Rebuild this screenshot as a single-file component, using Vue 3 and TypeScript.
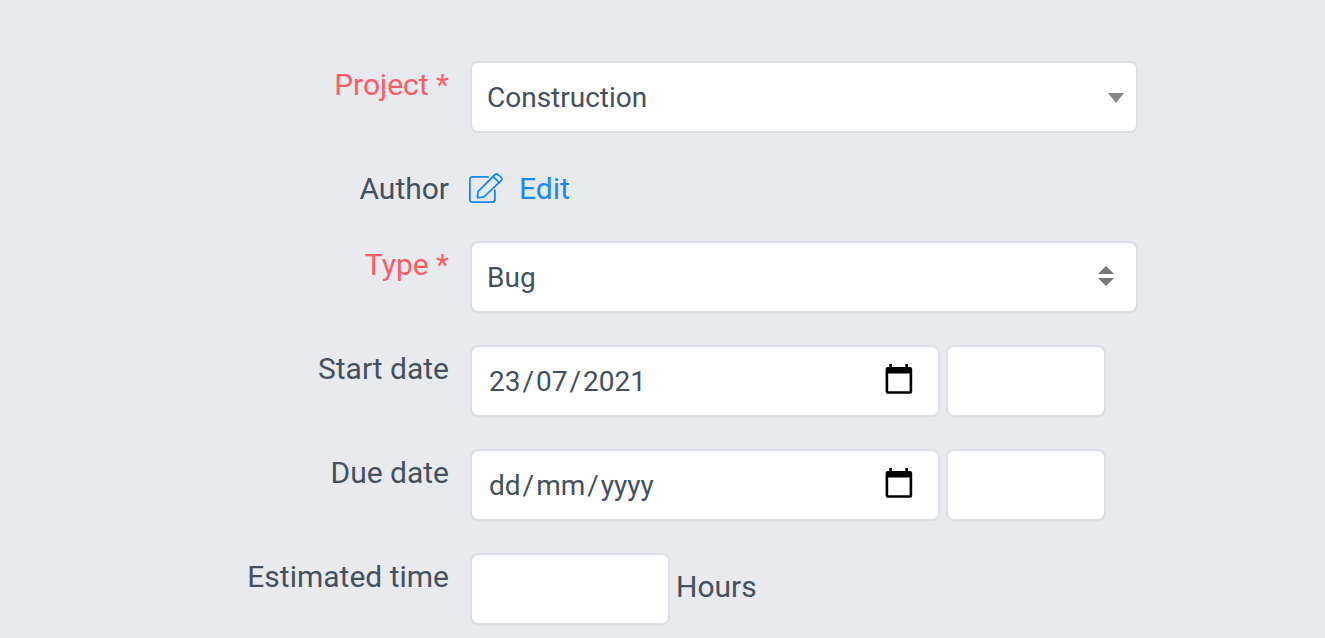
<script setup lang="ts">
import { ref } from 'vue'

interface DateRow {
  id: string
  label: string
  day: string
  month: string
  year: string
}

const project = ref('Construction')
const issueType = ref('Bug')
const estimated = ref('')
const times = ref<Record<string, string>>({ start: '', due: '' })
const dates = ref<DateRow[]>([
  { id: 'start', label: 'Start date', day: '23', month: '07', year: '2021' },
  { id: 'due', label: 'Due date', day: '', month: '', year: '' },
])
</script>

<template>
  <form class="form" @submit.prevent>
    <div class="row">
      <label class="label required" for="project">Project *</label>
      <div class="control select-wrap">
        <select id="project" v-model="project" class="box select">
          <option>Construction</option>
        </select>
        <svg class="arrow arrow-single" width="16" height="10" viewBox="0 0 16 10" aria-hidden="true">
          <path d="M0 0H16L8 10Z" fill="#888" />
        </svg>
      </div>
    </div>

    <div class="row">
      <span class="label">Author</span>
      <div class="control">
        <a class="edit" href="#">
          <svg width="34" height="32" viewBox="0 0 34 32" fill="none" stroke="currentColor" stroke-width="1.8" stroke-linejoin="round" stroke-linecap="round" aria-hidden="true">
            <path d="M19 3.9H3.4Q.9 3.9 .9 6.4V26.6Q.9 29.1 3.4 29.1H23.4Q25.9 29.1 25.9 26.6V17.5" />
            <path d="M8.4 24.6L9 18.6L25.6 2Q27.4 .2 29.3 1.8L31.9 4.2Q33.8 6 32 7.9L15.6 23.2Q14.4 24.2 12.6 24.3Z" />
            <path d="M24.1 3.6L30.2 9.6" />
          </svg>
          <span>Edit</span>
        </a>
      </div>
    </div>

    <div class="row">
      <label class="label required" for="type">Type *</label>
      <div class="control select-wrap">
        <select id="type" v-model="issueType" class="box select">
          <option>Bug</option>
        </select>
        <svg class="arrow arrow-double" width="16" height="20" viewBox="0 0 16 20" aria-hidden="true">
          <path d="M0 8L8 0L16 8ZM0 12H16L8 20Z" fill="#777" />
        </svg>
      </div>
    </div>

    <div v-for="d in dates" :key="d.id" class="row">
      <label class="label" :for="d.id + '-day'">{{ d.label }}</label>
      <div class="control">
        <div class="box date" role="group" :aria-label="d.label">
          <input :id="d.id + '-day'" v-model="d.day" class="part" type="text" placeholder="dd" maxlength="2" />
          <span class="slash">/</span>
          <input v-model="d.month" class="part" type="text" placeholder="mm" maxlength="2" aria-label="Month" />
          <span class="slash">/</span>
          <input v-model="d.year" class="part" type="text" placeholder="yyyy" maxlength="4" aria-label="Year" />
          <button class="picker" type="button" aria-label="Open calendar">
            <svg width="28" height="30" viewBox="0 0 28 30" aria-hidden="true">
              <path fill="#000" fill-rule="evenodd" d="M4.2 0H6.9V3H20.3V0H23V3H25Q27.2 3 27.2 5.2V27.6Q27.2 29.8 25 29.8H2.8Q.6 29.8 .6 27.6V5.2Q.6 3 2.8 3H4.2ZM3.2 9.5V27.2H24.6V9.5Z" />
            </svg>
          </button>
        </div>
        <input v-model="times[d.id]" class="box time" type="text" :aria-label="d.label + ' time'" />
      </div>
    </div>

    <div class="row">
      <label class="label" for="estimated">Estimated time</label>
      <div class="control">
        <input id="estimated" v-model="estimated" class="box hours" type="text" />
        <span class="unit">Hours</span>
      </div>
    </div>
  </form>
</template>

<style>
body {
  margin: 0;
  background: #e8eaee;
}
</style>

<style scoped>
.form {
  display: flex;
  flex-direction: column;
  gap: 32px;
  padding: 61px 0 13px;
  font-family: Roboto, sans-serif;
  font-size: 30px;
  line-height: 40px;
  color: #45505e;
}

.row {
  display: grid;
  grid-template-columns: 470fr 668fr 187fr;
  align-items: start;
}

.label {
  padding: 4px 21px 0 0;
  text-align: right;
  white-space: nowrap;
}

.required {
  color: #ff5c67;
}

.control {
  display: flex;
  align-items: center;
  gap: 6px;
  min-width: 0;
}

.box {
  box-sizing: border-box;
  height: 72px;
  margin: 0;
  border: 2px solid #dadee5;
  border-radius: 8px;
  background: #fff;
  color: inherit;
  font-family: inherit;
  font-size: 28px;
}

.select-wrap {
  position: relative;
}

.select {
  width: 100%;
  padding: 0 48px 0 15px;
  appearance: none;
}

.arrow {
  position: absolute;
  pointer-events: none;
}

.arrow-single {
  top: 32px;
  right: 14px;
}

.arrow-double {
  top: 25px;
  right: 24px;
}

.edit {
  display: flex;
  align-items: center;
  gap: 16px;
  padding-top: 4px;
  color: #1b87ff;
  text-decoration: none;
}

.edit svg {
  margin-left: -1px;
}

.date {
  display: flex;
  align-items: center;
  flex: 0 1 470px;
  min-width: 0;
  padding: 2px 25px 0 15px;
}

.part {
  field-sizing: content;
  padding: 0 2px;
  border: 0;
  background: none;
  color: inherit;
  font: inherit;
}

.part::placeholder {
  color: inherit;
  opacity: 1;
}

.picker {
  display: flex;
  margin-left: auto;
  padding: 0 0 6px;
  border: 0;
  background: none;
}

.time {
  flex: 0 1 160px;
  min-width: 0;
}

.hours {
  width: 200px;
}

.unit {
  padding-bottom: 4px;
}
</style>
